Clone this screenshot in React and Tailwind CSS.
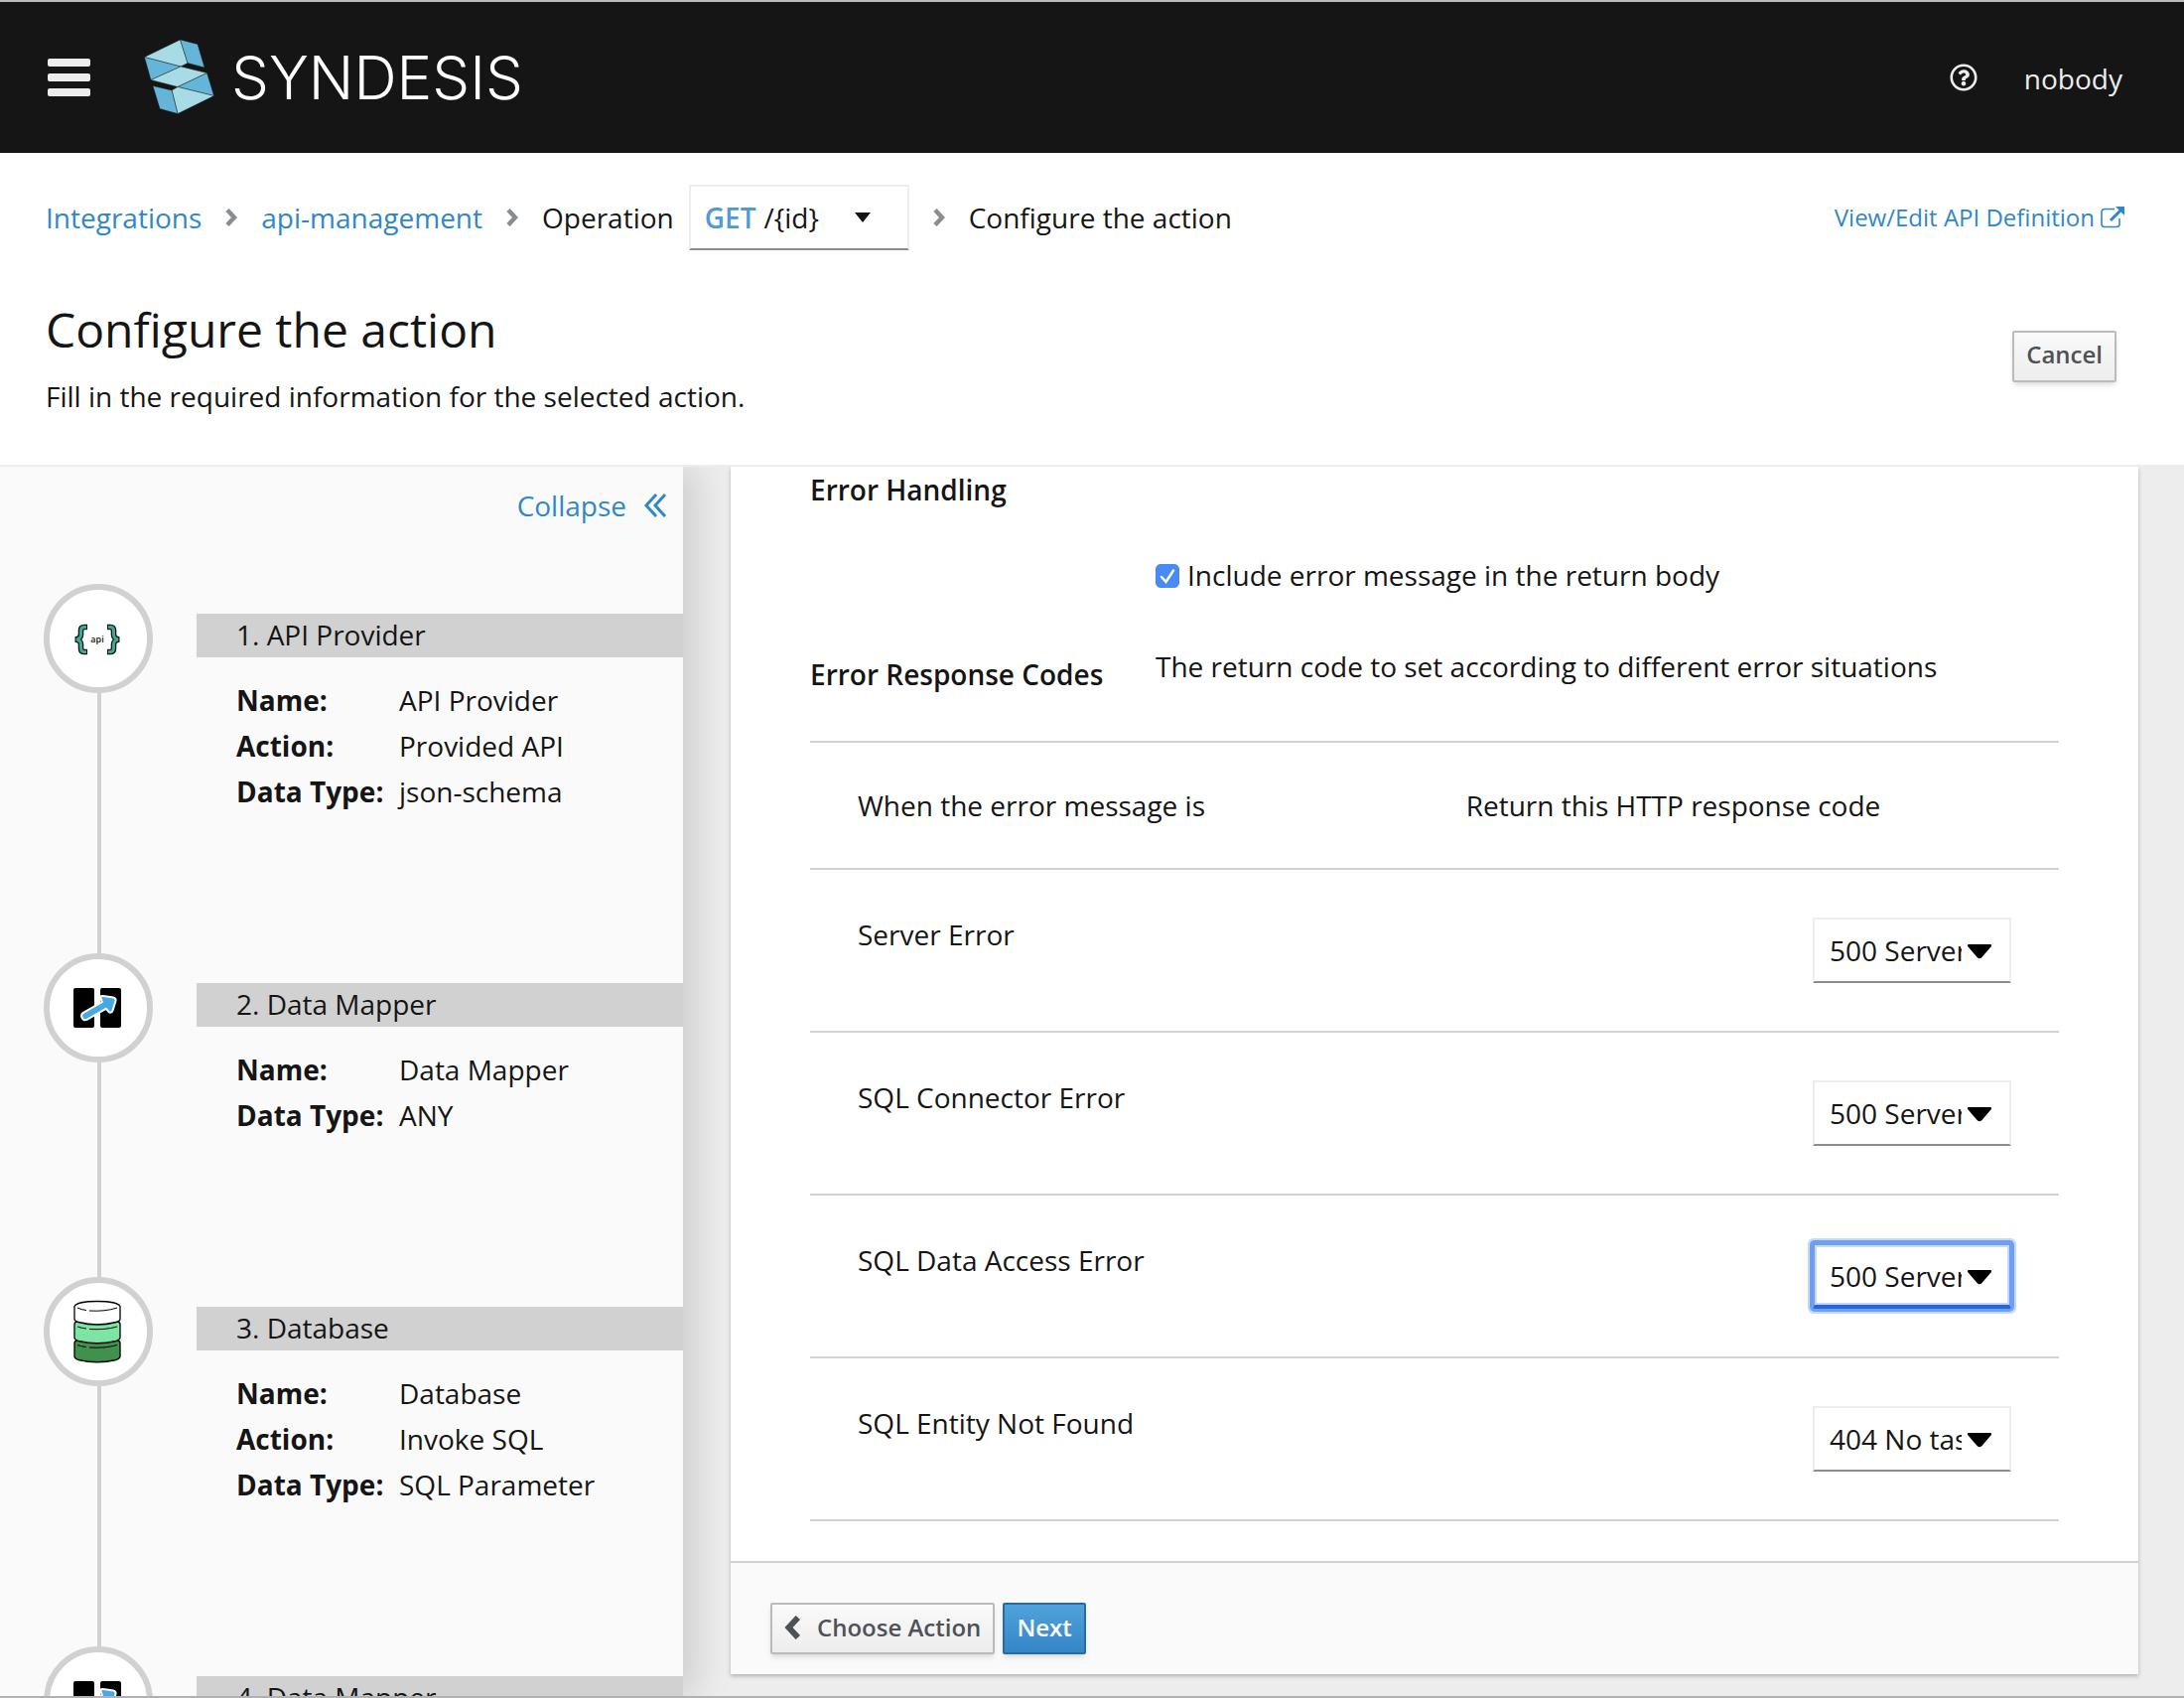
import { useState } from "react";
import { FaRegQuestionCircle } from "react-icons/fa";

function Logo() {
  return (
    <svg className="h-[76px] w-[72px]" viewBox="0 0 72 76" aria-hidden="true" stroke="#151515" strokeWidth="0.4" strokeLinejoin="round">
      <polygon fill="#a7dce6" points="0.5,17.5 36.5,0 44,23.5 37,27" />
      <polygon fill="#65b5d8" points="36.5,0 54,4.5 61,28 44,23.5" />
      <polygon fill="#65b5d8" points="0.5,17.5 37,27 7,40.5" />
      <polygon fill="#a7dce6" points="37,27 63.5,33.5 34,47.5 7,40.5" />
      <polygon fill="#65b5d8" points="63.5,33.5 70.5,56.5 34,47.5" />
      <polygon fill="#a7dce6" points="28,51 34,47.5 70.5,56.5 34,74.5" />
      <polygon fill="#65b5d8" points="9,46.5 28,51 34,74.5 16,69.5" />
    </svg>
  );
}

function Chevron({ className }) {
  return (
    <svg className={className} viewBox="0 0 12 18" fill="none" stroke="currentColor" strokeWidth="4.5" aria-hidden="true">
      <path d="M2 1.500 L9 9 L2 16.500" />
    </svg>
  );
}

function ExternalLink() {
  return (
    <svg className="h-[22px] w-6" viewBox="0 0 24 22" fill="none" stroke="currentColor" aria-hidden="true">
      <path strokeWidth="1.6" d="M14 2.5 H4 a3 3 0 0 0 -3 3 V17.500 a3 3 0 0 0 3 3 H16 a3 3 0 0 0 3 -3 V12" />
      <path strokeWidth="3" d="M10 14 L20 4" />
      <path fill="currentColor" stroke="none" d="M15 0 H24 V9 Z" />
    </svg>
  );
}

function ApiIcon() {
  return (
    <svg className="h-12 w-12" viewBox="0 0 48 48" aria-hidden="true">
      <g fill="none" strokeLinejoin="miter">
        <g stroke="#151515" strokeWidth="5.600">
          <path d="M14 12.500 H11 Q7.500 12.500 7.500 16 V20 Q7.500 24 2 25 Q7.500 26 7.500 30 V34 Q7.500 37.500 11 37.500 H14" />
          <path d="M34 12.500 H37 Q40.500 12.500 40.500 16 V20 Q40.500 24 46 25 Q40.500 26 40.500 30 V34 Q40.500 37.500 37 37.500 H34" />
        </g>
        <g stroke="#3fa796" strokeWidth="3">
          <path d="M13 12.500 H11 Q7.500 12.500 7.500 16 V20 Q7.500 24 3 25 Q7.500 26 7.500 30 V34 Q7.500 37.500 11 37.500 H13" />
          <path d="M35 12.500 H37 Q40.500 12.500 40.500 16 V20 Q40.500 24 45 25 Q40.500 26 40.500 30 V34 Q40.500 37.500 37 37.500 H35" />
        </g>
      </g>
      <text x="24" y="28" textAnchor="middle" fontSize="9" fontWeight="600" fill="#151515">api</text>
    </svg>
  );
}

function MapperIcon() {
  return (
    <svg className="h-12 w-12" viewBox="0 0 48 48" aria-hidden="true">
      <rect x="0" y="4" width="21" height="40" rx="2" fill="#000" />
      <rect x="27" y="4" width="21" height="40" rx="2" fill="#000" />
      <path
        d="M10 30 L30 18.500 L28.500 14 Q28 12.500 30 13 L40 14.500 Q42 15 41.500 17 L38.500 26.500 Q37.500 28.500 36 27 L33 23.500 L13 35 Q10.500 36 9.500 33.500 Q8.500 31 10 30 Z"
        fill="#45a9e6"
        stroke="#fff"
        strokeWidth="4"
        strokeLinejoin="round"
        paintOrder="stroke"
      />
    </svg>
  );
}

function DatabaseIcon() {
  return (
    <svg className="h-16 w-12" viewBox="0 0 48 64" aria-hidden="true" stroke="#000" strokeWidth="1.300" strokeLinejoin="round">
      <path fill="#3f914d" d="M1 44 Q1 41 4 41 H44 Q47 41 47 44 V57 Q47 59 43 60.500 Q24 65 5 60.500 Q1 59 1 57 Z" />
      <path fill="#7ce5a3" d="M1 25 Q1 22 4 22 H44 Q47 22 47 25 V38 Q47 40 43 41.500 Q24 46 5 41.500 Q1 40 1 38 Z" />
      <path fill="#fff" d="M1 6.500 Q4 1.500 24 1.500 Q44 1.500 47 6.500 V19 Q47 21.500 43 22.500 Q24 27.500 5 22.500 Q1 21.500 1 19 Z" />
      <g fill="none" strokeWidth="1">
        <path d="M4 8 Q8 10 13 10.500 M16 11 Q32 12 44 8" />
        <path d="M4 27 Q8 28.500 13 29 M16 29.500 Q32 30.500 44 27" />
        <path d="M4 45.500 Q8 47 13 47.500 M16 48 Q32 49 44 45.500" />
      </g>
    </svg>
  );
}

const steps = [
  {
    title: "1. API Provider",
    icon: ApiIcon,
    details: [["Name:", "API Provider"], ["Action:", "Provided API"], ["Data Type:", "json-schema"]],
  },
  {
    title: "2. Data Mapper",
    icon: MapperIcon,
    details: [["Name:", "Data Mapper"], ["Data Type:", "ANY"]],
  },
  {
    title: "3. Database",
    icon: DatabaseIcon,
    details: [["Name:", "Database"], ["Action:", "Invoke SQL"], ["Data Type:", "SQL Parameter"]],
  },
  {
    title: "4. Data Mapper",
    icon: MapperIcon,
    details: [],
  },
];

function Step({ title, icon: Icon, details }) {
  return (
    <li className="flex">
      <div className="flex w-28 shrink-0 flex-col items-center">
        <div className="flex size-[110px] shrink-0 items-center justify-center self-start rounded-full border-6 border-[#d1d1d1] bg-white pr-0.5">
          <Icon />
        </div>
        <div className="w-1 grow bg-[#d1d1d1]" />
      </div>
      <div className="ml-[42px] grow pt-[30px] pb-[140px]">
        <h2 className="bg-[#d1d1d1] pb-0.5 pl-10">{title}</h2>
        <dl className="mt-5 grid grid-cols-[164px_1fr] pl-10 leading-[46px]">
          {details.map(([term, value]) => (
            <div key={term} className="col-span-2 grid grid-cols-subgrid">
              <dt className="font-bold whitespace-nowrap">{term}</dt>
              <dd>{value}</dd>
            </div>
          ))}
        </dl>
      </div>
    </li>
  );
}

const codes = ["200 All is good", "404 No task found", "500 Server Error"];

const errors = [
  { label: "Server Error", code: codes[2] },
  { label: "SQL Connector Error", code: codes[2] },
  { label: "SQL Data Access Error", code: codes[2], focused: true },
  { label: "SQL Entity Not Found", code: codes[1] },
];

function CodeSelect({ label, initial, focused }) {
  const [value, setValue] = useState(initial);
  return (
    <div className="relative ml-auto h-[66px] w-[200px]">
      <select
        aria-label={label}
        value={value}
        onChange={(e) => setValue(e.target.value)}
        className={
          focused
            ? "h-full w-full appearance-none rounded-xs border-2 border-[#6f9ff0] border-b-4 border-b-[#2268da] bg-white pt-0.5 pr-12 pl-[15px] shadow-[0_0_0_3px_#6f9ff0,0_0_0_5px_#c5d7fa,inset_0_0_0_2px_#c5d7fa] outline-none"
            : "h-full w-full appearance-none rounded-none border-2 border-[#ededed] border-b-[#8a8d90] bg-white pr-12 pl-[15px] outline-none"
        }
      >
        {codes.map((code) => (
          <option key={code}>{code}</option>
        ))}
      </select>
      <svg className="pointer-events-none absolute top-[26px] right-[19px] h-4 w-[26px]" viewBox="0 0 26 16" aria-hidden="true">
        <path d="M2 1 H24 Q26 1.500 24.500 3.500 L15 14.500 Q13 16 11 14.500 L1.500 3.500 Q0 1.500 2 1 Z" fill="#000" />
      </svg>
    </div>
  );
}

export default function App() {
  const [include, setInclude] = useState(true);
  return (
    <div className="flex h-screen flex-col overflow-hidden border-b-2 border-[#b1b1b1] bg-white font-['Open_Sans',sans-serif] text-[28px] leading-[42px] text-[#151515]">
      <header className="flex h-[154px] shrink-0 items-center border-t-2 border-[#b8bbbb] bg-[#151515] pr-[62px] pl-12 text-[#ededed]">
        <button type="button" aria-label="Toggle navigation" className="flex w-[43px] flex-col gap-[7px]">
          <span className="h-2 w-full rounded-xs bg-[#ededed]" />
          <span className="h-2 w-full rounded-xs bg-[#ededed]" />
          <span className="h-2 w-full rounded-xs bg-[#ededed]" />
        </button>
        <a href="#home" className="ml-[54px] flex items-center gap-4 text-white">
          <Logo />
          <span className="font-['Inter',sans-serif] text-[60px] font-light">SYNDESIS</span>
        </a>
        <button type="button" aria-label="Help" className="ml-auto">
          <FaRegQuestionCircle className="size-7" />
        </button>
        <button type="button" className="ml-[47px] pt-0.5">nobody</button>
      </header>

      <div className="shrink-0 border-b-2 border-[#ededed] px-[46px] pt-8 pb-[46px]">
        <div className="flex items-center justify-between">
          <nav aria-label="Breadcrumb">
            <ol className="flex items-center">
              <li><a href="#integrations" className="text-[#2f87c9]">Integrations</a></li>
              <li><Chevron className="mx-6 h-[18px] w-3 text-[#8a8d90]" /></li>
              <li><a href="#api-management" className="text-[#2f87c9]">api-management</a></li>
              <li><Chevron className="mx-6 h-[18px] w-3 text-[#8a8d90]" /></li>
              <li className="flex items-center gap-[15px]">
                Operation
                <button type="button" className="flex h-[66px] w-[222px] items-center border-2 border-[#ededed] border-b-[#8a8d90] px-[14px]">
                  <span className="font-semibold text-[#519bd5]">GET</span>
                  <span className="ml-2">/{"{id}"}</span>
                  <svg className="ml-9 h-[10px] w-4" viewBox="0 0 16 10" aria-hidden="true">
                    <path d="M0 0 H16 L8 10 Z" fill="currentColor" />
                  </svg>
                </button>
              </li>
              <li><Chevron className="mx-6 h-[18px] w-3 text-[#8a8d90]" /></li>
              <li>Configure the action</li>
            </ol>
          </nav>
          <a href="#definition" className="mr-3.5 flex items-center gap-1.5 text-[24px] text-[#2f87c9]">
            View/Edit API Definition
            <ExternalLink />
          </a>
        </div>
        <div className="mt-9 flex items-center justify-between">
          <div>
            <h1 className="text-[48px] leading-[88px]">Configure the action</h1>
            <p className="leading-[46px]">Fill in the required information for the selected action.</p>
          </div>
          <button type="button" className="mt-2 mr-[22px] h-[52px] rounded-xs border-2 border-[#bbb] bg-linear-to-b from-[#fafafa] to-[#ededed] px-3 pb-1 text-[24px] font-semibold text-[#4d5258] shadow-md">
            Cancel
          </button>
        </div>
      </div>

      <div className="flex min-h-0 grow overflow-hidden bg-[#ededed]">
        <aside className="w-[688px] shrink-0 overflow-hidden bg-[#fafafa] pl-11 shadow-[12px_0_36px_rgba(0,0,0,0.14)]">
          <div className="flex justify-end pt-[18px] pr-4">
            <button type="button" className="flex items-center gap-[18px] text-[#2f87c9]">
              Collapse
              <svg className="h-6 w-[23px]" viewBox="1 0 23 24" fill="none" stroke="currentColor" strokeWidth="3" aria-hidden="true">
                <path d="M13 1 L3 12 L13 23 M22 1 L12 12 L22 23" />
              </svg>
            </button>
          </div>
          <ol className="mt-[58px]">
            {steps.map((step) => (
              <Step key={step.title} {...step} />
            ))}
          </ol>
        </aside>

        <main className="flex min-w-0 grow flex-col overflow-hidden pr-[46px] pb-[22px] pl-12">
          <section className="flex min-h-0 grow flex-col bg-white shadow-[0_2px_4px_rgba(0,0,0,0.25)]">
            <form className="grow overflow-hidden px-20 pt-0.5">
              <h2 className="text-[28px] font-semibold">Error Handling</h2>
              <label className="mt-11 ml-[348px] flex items-center gap-2">
                <span className="relative mt-0.5 flex size-6">
                  <input
                    type="checkbox"
                    checked={include}
                    onChange={(e) => setInclude(e.target.checked)}
                    className="peer size-6 appearance-none rounded-[5px] border border-[#8a8d90] bg-white checked:border-[#4a8af4] checked:bg-[#4a8af4]"
                  />
                  <svg className="pointer-events-none absolute inset-0 hidden size-6 peer-checked:block" viewBox="0 0 24 24" fill="none" stroke="#fff" strokeWidth="2.500" strokeLinecap="round" aria-hidden="true">
                    <path d="M6 13 L10.500 18 L18 6.500" />
                  </svg>
                </span>
                Include error message in the return body
              </label>
              <div className="mt-[50px] grid grid-cols-[348px_1fr]">
                <h3 className="mt-2 text-[28px] font-semibold">Error Response Codes</h3>
                <p>The return code to set according to different error situations</p>
              </div>
              <table className="mt-[46px] w-full border-collapse text-left">
                <thead>
                  <tr className="border-y-2 border-[#d1d1d1]">
                    <th scope="col" className="w-[48.7%] px-12 py-[42px] font-normal">When the error message is</th>
                    <th scope="col" className="px-12 py-[42px] font-normal">Return this HTTP response code</th>
                  </tr>
                </thead>
                <tbody>
                  {errors.map((error) => (
                    <tr key={error.label} className="border-b-2 border-[#d1d1d1]">
                      <td className="px-12 pt-11 align-top">{error.label}</td>
                      <td className="px-12 py-12">
                        <CodeSelect label={error.label} initial={error.code} focused={error.focused} />
                      </td>
                    </tr>
                  ))}
                </tbody>
              </table>
            </form>
            <footer className="flex h-[114px] shrink-0 items-center gap-2 border-t-2 border-[#d1d1d1] bg-[#fafafa] px-10 pt-5">
              <button type="button" className="flex h-[52px] items-center gap-4 rounded-xs border-2 border-[#bbb] bg-linear-to-b from-[#fafafa] to-[#ededed] px-3 pb-0.5 text-[24px] font-semibold text-[#4d5258] shadow-md">
                <Chevron className="h-6 w-[17px] rotate-180" />
                Choose Action
              </button>
              <button type="button" className="h-[52px] rounded-xs border-2 border-[#2b6a9e] bg-linear-to-b from-[#4fa3da] to-[#3585c8] px-3 pb-0.5 text-[24px] font-semibold text-white shadow-md">
                Next
              </button>
            </footer>
          </section>
        </main>
      </div>
    </div>
  );
}
